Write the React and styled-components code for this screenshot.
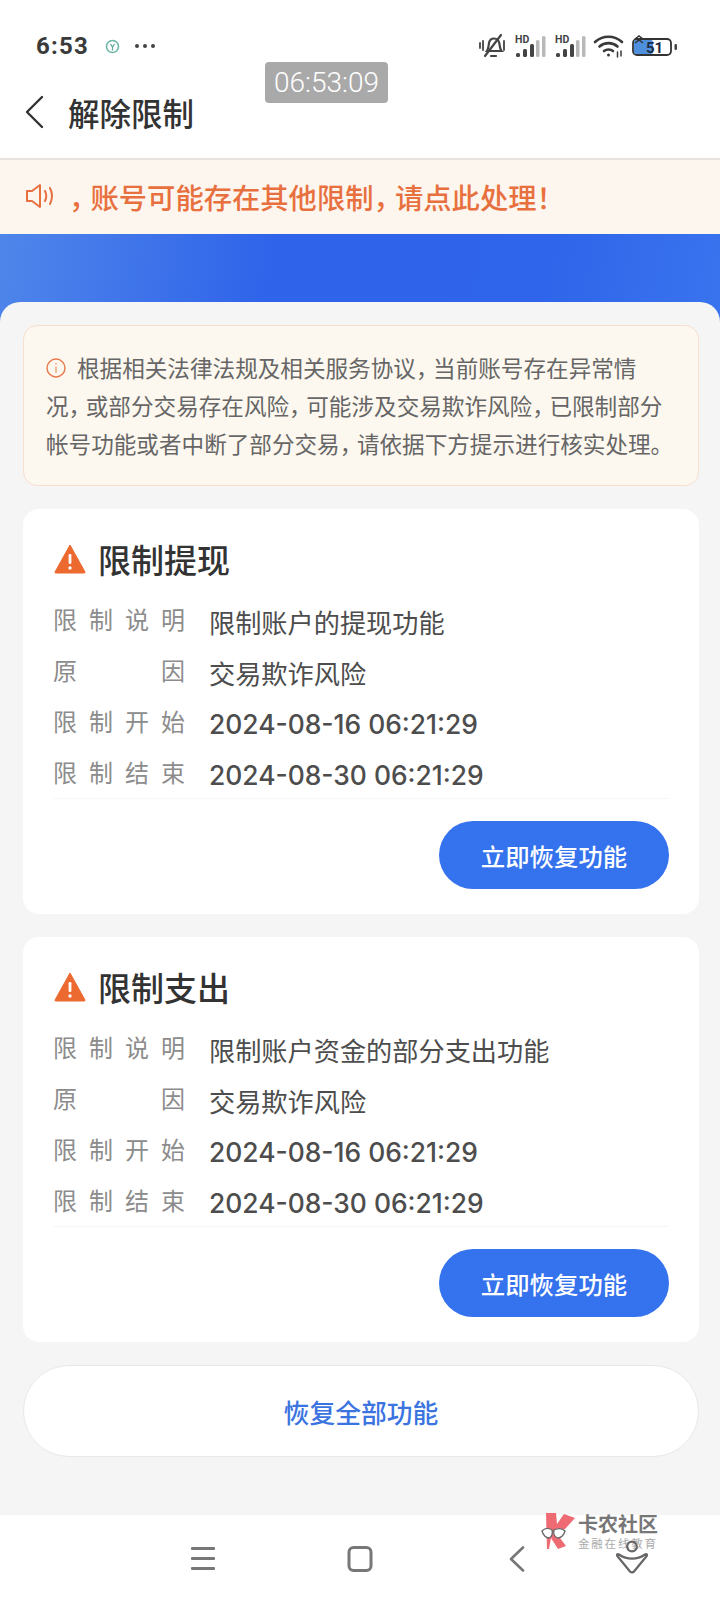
import styled, { createGlobalStyle } from 'styled-components'

const GlobalStyle = createGlobalStyle`
  html, body {
    margin: 0;
    padding: 0;
    background: #fff;
  }
  * {
    box-sizing: border-box;
  }
`

const Page = styled.div`
  position: relative;
  width: 720px;
  height: 1600px;
  display: flex;
  flex-direction: column;
  overflow: hidden;
  background: #fff;
  font-family: "Noto Sans CJK SC", "Noto Sans", sans-serif;
`

// Status bar
const StatusBar = styled.div`
  height: 60px;
  padding: 32px 42px 0 36px;
  display: flex;
  align-items: flex-start;
  justify-content: space-between;
`

const StatusLeft = styled.div`
  display: flex;
  align-items: center;
  height: 28px;
`

const Time = styled.span`
  font-family: Roboto, "Liberation Sans", sans-serif;
  font-size: 24px;
  font-weight: 700;
  letter-spacing: 1.2px;
  color: #3a3a3a;
  width: 69px;
`

const StatusRight = styled.div`
  display: flex;
  align-items: center;
  height: 28px;
`

const Signal = styled.svg`
  margin-left: ${p => p.$gap}px;
`

const Clock = styled.div`
  position: absolute;
  left: 265px;
  top: 62px;
  width: 123px;
  height: 41px;
  border-radius: 4px;
  background: #a9a9a9;
  color: #fff;
  font-family: Roboto, "Liberation Sans", sans-serif;
  font-size: 28px;
  font-weight: 300;
  display: flex;
  align-items: center;
  justify-content: center;
`

// Title bar
const TitleBar = styled.div`
  height: 98px;
  padding: 6px 0 0 24px;
  display: flex;
  align-items: center;
`

const PageTitle = styled.h1`
  margin: 0 0 0 24px;
  font-size: 31.5px;
  font-weight: 500;
  color: #333;
`

const Notice = styled.div`
  height: 76px;
  border-top: 2px solid #e6e3e0;
  background: #fdf6ee;
  padding: 0 0 2px 25px;
  display: flex;
  align-items: center;
  color: #e8703f;
  font-size: 28.3px;
  font-weight: 500;
`

const NoticeText = styled.span`
  margin-left: 14px;
  white-space: nowrap;
`

// the phone font has narrower commas than Noto
const Comma = styled.span`
  letter-spacing: -0.24em;
`

const Banner = styled.div`
  flex: 1;
  display: flex;
  flex-direction: column;
  padding-top: 68px;
  background: linear-gradient(100deg, #4f86ea 0%, #2f63ea 38%, #2f65ea 75%, #3a74ee 100%) top / 100% 100px no-repeat;
`

const Sheet = styled.main`
  flex: 1;
  background: #f5f5f5;
  border-radius: 20px 20px 0 0;
  padding: 23px 21px 0 23px;
  display: flex;
  flex-direction: column;
`

const Alert = styled.div`
  height: 161px;
  border: 1.5px solid #f6dfcf;
  border-radius: 14px;
  background: #fdf8ef;
  padding: 23px 10px 0 22px;
  font-size: 22.6px;
  line-height: 38px;
  color: #666;
  white-space: nowrap;
`

const AlertLine = styled.div`
  display: flex;
  align-items: center;
  height: 38px;
`

const AlertIcon = styled.svg`
  margin-right: 11px;
  flex: none;
`

const Card = styled.section`
  height: 405px;
  margin-top: 23px;
  background: #fff;
  border-radius: 16px;
  padding: 29px 30px 0 30px;
`

const CardHead = styled.div`
  display: flex;
  align-items: center;
  height: 42px;
  margin-bottom: 16px;
  padding-left: 1px;
`

const CardTitle = styled.h2`
  margin: 0 0 0 12px;
  font-size: 33px;
  font-weight: 500;
  color: #333;
`

const Row = styled.div`
  display: flex;
  align-items: center;
  height: 51px;
`

const Label = styled.span`
  width: 132px;
  margin-right: 24px;
  font-size: 24px;
  line-height: 30px;
  color: #8c8c8c;
  text-align: justify;
  text-align-last: justify;
  position: relative;
  top: -3px;
`

const Value = styled.span`
  font-family: ${p => (p.$date ? 'Inter, "Noto Sans CJK SC", sans-serif' : 'inherit')};
  font-size: ${p => (p.$date ? '26.4px' : '26.2px')};
  font-weight: ${p => (p.$date ? 500 : 400)};
  color: #4d4d4d;
  white-space: nowrap;
`

const Foot = styled.div`
  margin-top: -2px;
  border-top: 1px solid #f6f6f6;
  padding-top: 22px;
  display: flex;
  justify-content: flex-end;
`

const RestoreButton = styled.button`
  width: 230px;
  height: 68px;
  border: none;
  border-radius: 34px;
  background: #3572ee;
  color: #fff;
  font-family: inherit;
  font-size: 24.4px;
  font-weight: 500;
  padding: 0;
`

const RestoreAll = styled.button`
  height: 92px;
  margin-top: 23px;
  border: 1.5px solid #e8e8e8;
  border-radius: 46px;
  background: #fff;
  color: #3b74e0;
  font-family: inherit;
  font-size: 25.8px;
  font-weight: 500;
  padding: 0;
`

// Bottom navigation
const Nav = styled.nav`
  flex: none;
  height: 85px;
  background: #fff;
  display: grid;
  grid-template-columns: repeat(3, 157px);
  justify-content: center;
  align-items: start;
  justify-items: center;
  padding-top: 31px;
`

const Watermark = styled.div`
  position: absolute;
  left: 540px;
  top: 1512px;
  display: flex;
`

const MarkText = styled.div`
  margin-left: 2px;
  display: flex;
  flex-direction: column;
  color: #777;
`

const MarkName = styled.span`
  font-size: 20px;
  line-height: 24px;
  font-weight: 700;
  white-space: nowrap;
`

const MarkSub = styled.span`
  font-size: 11.5px;
  line-height: 14px;
  letter-spacing: 1.8px;
  color: #aaa;
  white-space: nowrap;
`

const PersonIcon = styled.svg`
  position: absolute;
  left: 616px;
  top: 1540px;
`

function WarnIcon() {
  return (
    <svg width="32" height="30" viewBox="0 0 32 30">
      <path d="M16 1 L31 28 Q31.5 29 30 29 L2 29 Q.5 29 1 28 Z" fill="#ec6a30" stroke="#ec6a30" strokeLinejoin="round" />
      <rect x="14.6" y="10" width="2.8" height="10" rx="1.2" fill="#fff" />
      <circle cx="16" cy="24" r="1.7" fill="#fff" />
    </svg>
  )
}

function SignalIcon({ gap }) {
  return (
    <Signal $gap={gap} width="32" height="24" viewBox="0 0 32 24">
      <text x="0" y="9" fontFamily="Roboto, sans-serif" fontSize="10.5" fontWeight="700" fill="#444">HD</text>
      <rect x="1" y="19" width="4" height="4" rx="1.5" fill="#444" />
      <rect x="8" y="15" width="4" height="8" rx="1.5" fill="#444" />
      <rect x="15" y="10" width="4" height="13" rx="1.5" fill="#444" />
      <rect x="21" y="6" width="3.5" height="17" rx="1.5" fill="#b8b8b8" />
      <rect x="27" y="2" width="3.5" height="21" rx="1.5" fill="#b8b8b8" />
    </Signal>
  )
}

const limits = [
  { title: '限制提现', desc: '限制账户的提现功能' },
  { title: '限制支出', desc: '限制账户资金的部分支出功能' },
]

const COMMA = <Comma>{'\uFF0C'}</Comma>
const BANG = '\uFF01'

export default function App() {
  return (
    <Page>
      <GlobalStyle />
      <StatusBar>
        <StatusLeft>
          <Time>6:53</Time>
          <svg width="16" height="16" viewBox="0 0 16 16" fill="none">
            <circle cx="7.5" cy="8.5" r="6" stroke="#6db7a8" strokeWidth="1.6" />
            <path d="M5.5 6l2 3 2-3M7.5 9v3.5" stroke="#5fa99a" strokeWidth="1.3" />
          </svg>
          <svg width="24" height="16" viewBox="0 0 24 16" style={{ marginLeft: 12 }}>
            <circle cx="4" cy="8" r="2" fill="#444" />
            <circle cx="12" cy="8" r="2" fill="#444" />
            <circle cx="20" cy="8" r="2" fill="#444" />
          </svg>
        </StatusLeft>
        <StatusRight>
          <svg width="30" height="26" viewBox="0 0 30 26" fill="none" stroke="#444" strokeWidth="2.2" strokeLinecap="round">
            <path d="M9 18c1.500-2 1.500-5 2-8 .6-3 3-4.500 5-4.500 3 0 5 2.500 5.500 5.500.4 3 .5 5.500 2 7H9z" />
            <path d="M13 23h5" />
            <path d="M7 23L23 2" />
            <path d="M2 10v5M5 8v9M26 8v9" strokeWidth="1.800" />
          </svg>
          <SignalIcon gap={7} />
          <SignalIcon gap={8} />
          <svg width="32" height="24" viewBox="0 0 32 24" fill="none" stroke="#3a3a3a" strokeWidth="2.600" strokeLinecap="round" style={{ marginLeft: 6 }}>
            <path d="M2 8c7.500-7 19.500-7 27 0" />
            <path d="M6.500 12.500c5-4.500 13-4.500 18 0" />
            <path d="M11 17c2.500-2 6.500-2 9 0" />
            <circle cx="15.500" cy="21" r="1.500" fill="#3a3a3a" stroke="none" />
            <path d="M24.500 18v5M28 17v5" strokeWidth="1.500" />
          </svg>
          <svg width="46" height="24" viewBox="0 0 46 24" fill="none" style={{ marginLeft: 7 }}>
            <rect x="1" y="5" width="38" height="16" rx="4" stroke="#333" strokeWidth="1.800" fill="#fff" />
            <rect x="2" y="6" width="19" height="14" rx="2" fill="#4e90dd" />
            <path d="M3 5l4-3 4 3M3 9l4-3 4 3" stroke="#333" strokeWidth="1.500" />
            <text x="14" y="18.500" fontFamily="Roboto, sans-serif" fontSize="15" fontWeight="700" fill="#1d2a44">51</text>
            <rect x="42.500" y="10" width="2.500" height="6" rx="1.200" fill="#444" />
          </svg>
        </StatusRight>
      </StatusBar>
      <Clock>06:53:09</Clock>

      <TitleBar>
        <svg width="20" height="34" viewBox="0 0 20 34" fill="none" stroke="#333" strokeWidth="2.400" strokeLinecap="round" strokeLinejoin="round">
          <path d="M18 2L3 17l15 15" />
        </svg>
        <PageTitle>解除限制</PageTitle>
      </TitleBar>

      <Notice>
        <svg width="30" height="26" viewBox="0 0 30 26" fill="none" stroke="#e8703f" strokeWidth="2" strokeLinejoin="round" strokeLinecap="round">
          <path d="M2 8h5l8-6v22l-8-6H2z" />
          <path d="M20 8c1.500 3 1.500 7 0 10M25 5c2.500 5 2.500 11 0 16" />
        </svg>
        <NoticeText>{COMMA}账号可能存在其他限制{COMMA}请点此处理{BANG}</NoticeText>
      </Notice>

      <Banner>
        <Sheet>
          <Alert>
            <AlertLine>
              <AlertIcon width="20" height="20" viewBox="0 0 20 20" fill="none">
                <circle cx="10" cy="10" r="9" stroke="#e8784a" strokeWidth="1.400" />
                <path d="M10 8.500v6.500M10 5v1.500" stroke="#eda070" strokeWidth="1.400" />
              </AlertIcon>
              <span>根据相关法律法规及相关服务协议{COMMA}当前账号存在异常情</span>
            </AlertLine>
            <div>况{COMMA}或部分交易存在风险{COMMA}可能涉及交易欺诈风险{COMMA}已限制部分</div>
            <div>帐号功能或者中断了部分交易{COMMA}请依据下方提示进行核实处理。</div>
          </Alert>

          {limits.map(item => (
            <Card key={item.title}>
              <CardHead>
                <WarnIcon />
                <CardTitle>{item.title}</CardTitle>
              </CardHead>
              <Row>
                <Label>限 制 说 明</Label>
                <Value>{item.desc}</Value>
              </Row>
              <Row>
                <Label>原 因</Label>
                <Value>交易欺诈风险</Value>
              </Row>
              <Row>
                <Label>限 制 开 始</Label>
                <Value $date>2024-08-16 06:21:29</Value>
              </Row>
              <Row>
                <Label>限 制 结 束</Label>
                <Value $date>2024-08-30 06:21:29</Value>
              </Row>
              <Foot>
                <RestoreButton>立即恢复功能</RestoreButton>
              </Foot>
            </Card>
          ))}

          <RestoreAll>恢复全部功能</RestoreAll>
        </Sheet>
      </Banner>

      <Nav>
        <svg width="26" height="26" viewBox="0 0 26 26" fill="#777">
          <rect x="1" y="1" width="24" height="3" rx="1" />
          <rect x="1" y="11" width="24" height="3" rx="1" />
          <rect x="1" y="21" width="24" height="3" rx="1" />
        </svg>
        <svg width="26" height="26" viewBox="0 0 26 26" fill="none" stroke="#777" strokeWidth="3">
          <rect x="2" y="1.500" width="22" height="23" rx="4.500" />
        </svg>
        <svg width="18" height="26" viewBox="0 0 18 26" fill="none" stroke="#777" strokeWidth="2.600" strokeLinecap="round" strokeLinejoin="round">
          <path d="M15 1.500L3 13l12 11.500" />
        </svg>
      </Nav>

      <Watermark>
        <svg width="36" height="38" viewBox="0 0 36 38">
          <path d="M6 1h10l1 11L24 2l11 4-10 11-8 5 9 12-8 3-7-11-2 11H7z" fill="#ee6b74" />
          <path d="M2 19c3-3 7-3 10-1 1 3 0 7-3 8-3 0-6-3-7-7z" fill="#fff" stroke="#666" strokeWidth="1.300" />
          <path d="M14 18c4-2 8-2 11 1-1 4-4 7-7 7-3-1-5-4-4-8z" fill="#fff" stroke="#666" strokeWidth="1.300" />
        </svg>
        <MarkText>
          <MarkName>卡农社区</MarkName>
          <MarkSub>金融在线教育</MarkSub>
        </MarkText>
      </Watermark>
      <PersonIcon width="32" height="34" viewBox="0 0 32 34" fill="none" stroke="#666" strokeWidth="2.200" strokeLinejoin="round">
        <circle cx="16" cy="6.500" r="4.800" />
        <path d="M3 14.500c8 5.500 18 5.500 26 0 1.500-1 2.500 0 1.500 1.800L18 31.500c-1 1.200-3 1.200-4 0L1.500 16.300c-1-1.800 0-2.800 1.500-1.800z" />
      </PersonIcon>
    </Page>
  )
}
